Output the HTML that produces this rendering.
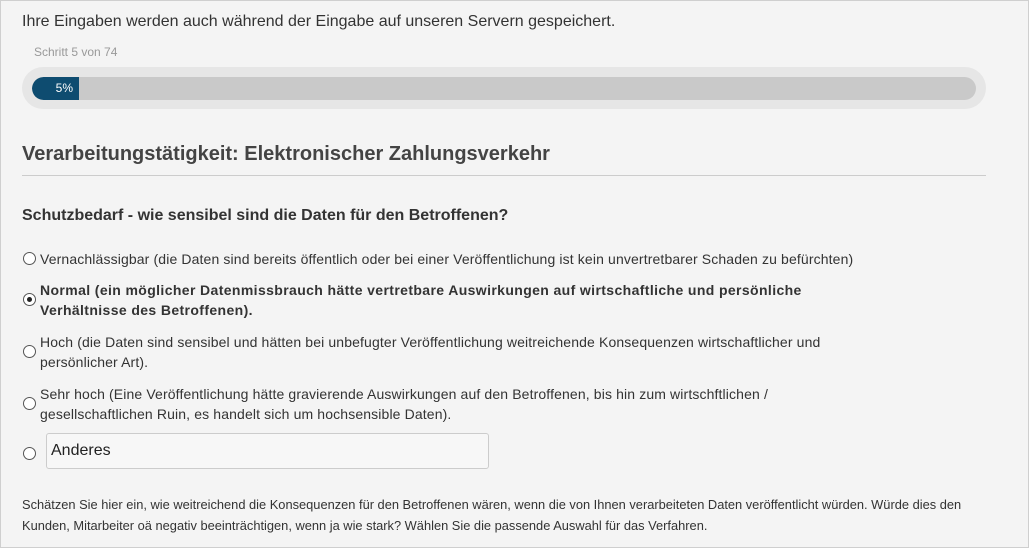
<!DOCTYPE html>
<html><head><meta charset="utf-8"><style>
body{margin:0;width:1029px;height:548px;overflow:hidden;background:#f4f4f4;font-family:"Liberation Sans",Arial,sans-serif;color:#333;}
.frame{position:absolute;left:0;top:0;width:1027px;height:546px;border:1px solid #cfcfcf;}
.a{position:absolute;white-space:nowrap;}
.r{position:absolute;left:23px;width:11px;height:11px;border:1px solid #555;border-radius:50%;background:#fff;}
.r.on::after{content:"";position:absolute;left:3px;top:3px;width:5px;height:5px;border-radius:50%;background:#222;}
.opt{font-size:14px;letter-spacing:0.13px;line-height:20px;left:40px;}
</style></head><body>
<div class="frame"></div>
<div class="a" style="left:22px;top:13px;font-size:16px;color:#333">Ihre Eingaben werden auch während der Eingabe auf unseren Servern gespeichert.</div>
<div class="a" style="left:34px;top:45px;font-size:12px;color:#999">Schritt 5 von 74</div>
<div class="a" style="left:22px;top:67px;width:964px;height:42px;border-radius:21px;background:#e6e6e6;"></div>
<div class="a" style="left:32px;top:77px;width:944px;height:23px;border-radius:12px;background:#c9c9c9;overflow:hidden;">
 <div style="width:47px;height:23px;background:#0e4c70;color:#fff;font-size:12px;line-height:23px;text-align:right;box-sizing:border-box;padding-right:6px;border-radius:12px 0 0 12px">5%</div>
</div>
<div class="a" style="left:22px;top:143px;font-size:20px;font-weight:bold;color:#444">Verarbeitungstätigkeit: Elektronischer Zahlungsverkehr</div>
<div class="a" style="left:22px;top:175px;width:964px;height:1px;background:#ccc"></div>
<div class="a" style="left:22px;top:207px;font-size:16px;font-weight:bold;color:#333">Schutzbedarf - wie sensibel sind die Daten für den Betroffenen?</div>
<div class="r" style="top:252px"></div>
<div class="a opt" style="top:249px">Vernachlässigbar (die Daten sind bereits öffentlich oder bei einer Veröffentlichung ist kein unvertretbarer Schaden zu befürchten)</div>
<div class="r on" style="top:293px"></div>
<div class="a opt" style="top:280px;font-weight:bold;letter-spacing:0.38px">Normal (ein möglicher Datenmissbrauch hätte vertretbare Auswirkungen auf wirtschaftliche und persönliche<br>Verhältnisse des Betroffenen).</div>
<div class="r" style="top:345px"></div>
<div class="a opt" style="top:332px">Hoch (die Daten sind sensibel und hätten bei unbefugter Veröffentlichung weitreichende Konsequenzen wirtschaftlicher und<br>persönlicher Art).</div>
<div class="r" style="top:397px"></div>
<div class="a opt" style="top:384px">Sehr hoch (Eine Veröffentlichung hätte gravierende Auswirkungen auf den Betroffenen, bis hin zum wirtschftlichen /<br>gesellschaftlichen Ruin, es handelt sich um hochsensible Daten).</div>
<div class="r" style="top:447px"></div>
<div class="a" style="left:46px;top:433px;border:1px solid #ccc;border-radius:3px;background:#f7f7f7;font-size:16px;line-height:34px;padding-left:4px;box-sizing:border-box;width:443px;height:36px;color:#222">Anderes</div>
<div class="a" style="left:22px;top:494px;font-size:12.85px;line-height:21px;color:#333">Schätzen Sie hier ein, wie weitreichend die Konsequenzen für den Betroffenen wären, wenn die von Ihnen verarbeiteten Daten veröffentlicht würden. Würde dies den<br>Kunden, Mitarbeiter oä negativ beeinträchtigen, wenn ja wie stark? Wählen Sie die passende Auswahl für das Verfahren.</div>
</body></html>
